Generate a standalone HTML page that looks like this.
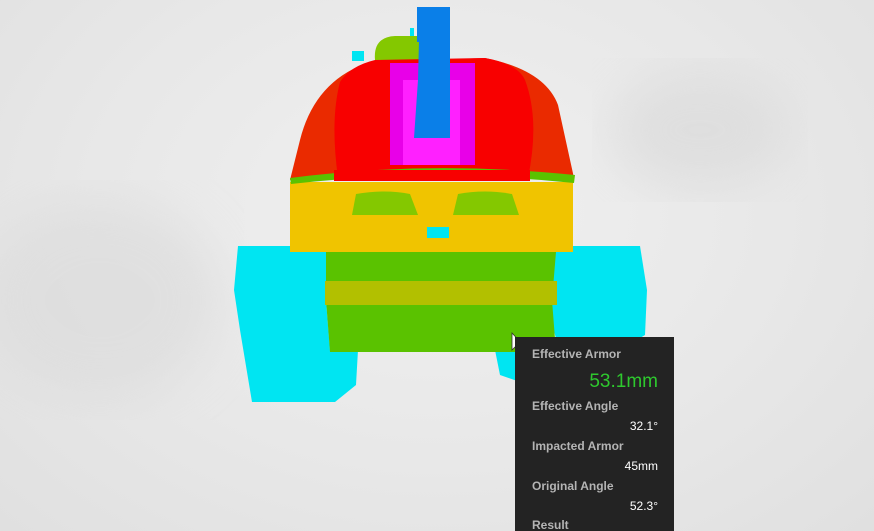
<!DOCTYPE html>
<html><head><meta charset="utf-8"><style>
html,body{margin:0;padding:0;width:874px;height:531px;overflow:hidden;}
body{background:radial-gradient(ellipse at 50% 40%,#f0f0f0 0%,#e8e8e8 55%,#e0e0e0 100%);position:relative;font-family:"Liberation Sans",sans-serif;}
.tt{position:absolute;left:515px;top:337px;width:159px;height:194px;background:#232323;}
.l{position:absolute;left:17px;color:#b4b4b4;font-weight:bold;font-size:12px;}
.v{position:absolute;right:16px;color:#fff;font-size:12px;}
</style></head><body>
<svg width="874" height="531" style="position:absolute;left:0;top:0">
<defs><filter id="b"><feGaussianBlur stdDeviation="25"/></filter></defs>
<ellipse cx="700" cy="130" rx="90" ry="60" fill="#d8d8d8" opacity="0.6" filter="url(#b)"/>
<ellipse cx="100" cy="300" rx="120" ry="100" fill="#dadada" opacity="0.6" filter="url(#b)"/>
<!-- tracks -->
<polygon points="238,246 330,246 326,300 330,350 358,350 356,385 335,402 252,402 240,330 234,290" fill="#00e5f2"/>
<polygon points="548,246 640,246 647,290 645,335 620,350 560,352 545,300" fill="#00e5f2"/>
<polygon points="495,350 520,350 520,382 500,375" fill="#00e5f2"/>
<!-- hull -->
<rect x="290" y="182" width="283" height="70" fill="#f0c400"/>
<polygon points="326,252 556,252 552,300 556,352 330,352 326,300" fill="#5ac200"/>
<rect x="325" y="281" width="232" height="24" fill="#b2c000"/>
<path d="M352,215 L356,194 Q385,189 410,194 L418,215 Z" fill="#84c800"/>
<path d="M453,215 L458,194 Q485,189 512,194 L519,215 Z" fill="#84c800"/>
<rect x="427" y="227" width="22" height="11" fill="#00e5f2"/>
<!-- turret -->
<path d="M375,60 Q373,37 395,36 L420,36 L420,60 Z" fill="#84c800"/>
<rect x="352" y="51" width="12" height="10" fill="#00e5f2"/>
<rect x="410" y="28" width="4" height="8" fill="#00e5f2"/>
<path d="M290,180 L300,140 Q315,80 370,62 L485,58 Q545,70 558,105 L574,178 Q430,165 290,180 Z" fill="#ea2a00"/>
<path d="M338,178 Q330,120 340,82 Q350,66 375,60 L485,58 Q518,64 525,80 Q540,120 528,178 Z" fill="#f80000"/>
<path d="M290,178 Q430,160 575,175 L574,183 Q430,168 291,184 Z" fill="#5ac200"/>
<rect x="334" y="170" width="196" height="11" fill="#f80000"/>
<rect x="390" y="63" width="85" height="102" fill="#e800e8"/>
<rect x="403" y="80" width="57" height="85" fill="#ff20ff"/>
<rect x="417" y="7" width="33" height="35" fill="#0a7fe8"/>
<path d="M419,40 L450,40 L450,138 L414,138 L418,80 Z" fill="#0a7fe8"/>
<!-- cursor -->
<path d="M512,333 L512,350 L516,346 L519,352 L521,351 L518,345 L523,345 Z" fill="#fff" stroke="#333" stroke-width="0.8"/>
</svg>
<div class="tt">
<div class="l" style="top:10px">Effective Armor</div>
<div class="v" style="top:34px;font-size:19px;color:#2ec82e;">53.1mm</div>
<div class="l" style="top:62px">Effective Angle</div>
<div class="v" style="top:82px">32.1°</div>
<div class="l" style="top:102px">Impacted Armor</div>
<div class="v" style="top:122px">45mm</div>
<div class="l" style="top:142px">Original Angle</div>
<div class="v" style="top:162px">52.3°</div>
<div class="l" style="top:181px">Result</div>
</div>
</body></html>
